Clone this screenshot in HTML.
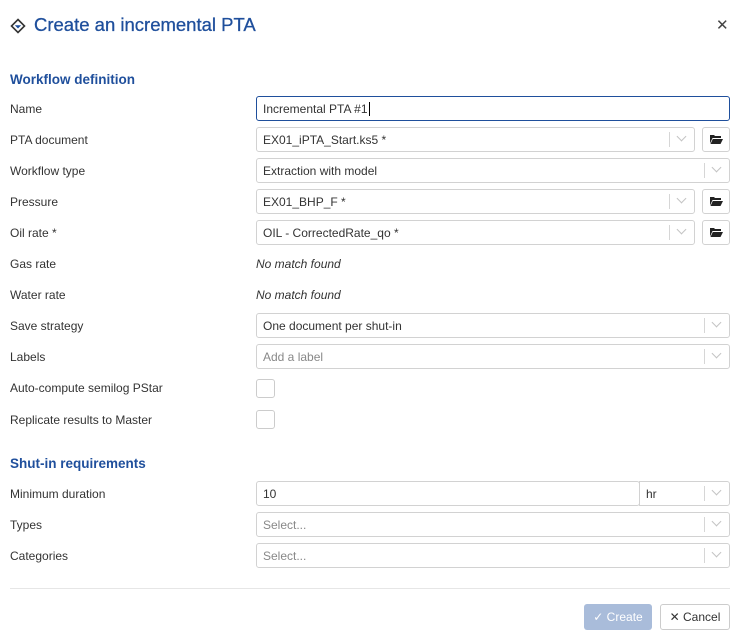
<!DOCTYPE html><html><head><style>
*{box-sizing:border-box;margin:0;padding:0}
body{width:740px;height:643px;background:#fff;font-family:"Liberation Sans",sans-serif;font-size:12px;color:#333;position:relative;overflow:hidden}
.a{position:absolute}
.l{position:absolute;left:10px;line-height:14px}
.h{position:absolute;left:10px;font-size:13.5px;font-weight:bold;color:#1f4f9c}
.b{position:absolute;height:25px;border:1px solid #d2d2d2;border-radius:3px;background:#fff;line-height:25px;padding-left:6px;white-space:nowrap}
.dd{position:absolute;right:0;top:4px;width:25px;height:15px;border-left:1px solid #d6d6d6}
.dd:after{content:"";position:absolute;left:8px;top:1px;width:6px;height:6px;border-right:1px solid #c4c4c4;border-bottom:1px solid #c4c4c4;transform:rotate(45deg)}
.f{position:absolute;width:28px;height:25px;border:1px solid #d2d2d2;border-radius:3px;left:702px}
.f svg{position:absolute;left:7px;top:6px}
.cb{position:absolute;left:256px;width:19px;height:19px;border:1px solid #ccc;border-radius:3px}
.ph{color:#888}
</style></head><body>
<svg class="a" style="left:10px;top:18px" width="16" height="16" viewBox="0 0 16 16"><path d="M8 1.5L14.5 8 8 14.5 1.5 8Z" fill="none" stroke="#333" stroke-width="1.6"/><path d="M4.8 7.2h6.4L8 10.5Z" fill="#1f4f9c"/></svg>
<div class="a" style="left:34px;top:14px;font-size:18.5px;color:#1f4f9c;-webkit-text-stroke:0.3px #1f4f9c">Create an incremental PTA</div>
<div class="a" style="left:716px;top:16px;font-size:15px;color:#444">✕</div>
<div class="h" style="top:72px">Workflow definition</div>
<div class="l" style="top:102px">Name</div>
<div class="b" style="left:256px;top:96px;width:474px;border-color:#1f4f9c">Incremental PTA #1<span style="border-left:1px solid #000;margin-left:1px"></span></div>
<div class="l" style="top:133px">PTA document</div>
<div class="b" style="left:256px;top:127px;width:439px">EX01_iPTA_Start.ks5 *<span class="dd"></span></div>
<div class="f" style="top:127px"><svg width="13" height="11" viewBox="0 0 13 11"><path d="M0 1h4l1 1h6v2H2.5L0 9.5Z M2.8 5H13L10.5 10H0.5Z" fill="#222"/></svg></div>
<div class="l" style="top:164px">Workflow type</div>
<div class="b" style="left:256px;top:158px;width:474px">Extraction with model<span class="dd"></span></div>
<div class="l" style="top:195px">Pressure</div>
<div class="b" style="left:256px;top:189px;width:439px">EX01_BHP_F *<span class="dd"></span></div>
<div class="f" style="top:189px"><svg width="13" height="11" viewBox="0 0 13 11"><path d="M0 1h4l1 1h6v2H2.5L0 9.5Z M2.8 5H13L10.5 10H0.5Z" fill="#222"/></svg></div>
<div class="l" style="top:226px">Oil rate *</div>
<div class="b" style="left:256px;top:220px;width:439px">OIL - CorrectedRate_qo *<span class="dd"></span></div>
<div class="f" style="top:220px"><svg width="13" height="11" viewBox="0 0 13 11"><path d="M0 1h4l1 1h6v2H2.5L0 9.5Z M2.8 5H13L10.5 10H0.5Z" fill="#222"/></svg></div>
<div class="l" style="top:257px">Gas rate</div>
<div class="a" style="left:256px;top:257px;font-style:italic">No match found</div>
<div class="l" style="top:288px">Water rate</div>
<div class="a" style="left:256px;top:288px;font-style:italic">No match found</div>
<div class="l" style="top:319px">Save strategy</div>
<div class="b" style="left:256px;top:313px;width:474px">One document per shut-in<span class="dd"></span></div>
<div class="l" style="top:350px">Labels</div>
<div class="b ph" style="left:256px;top:344px;width:474px">Add a label<span class="dd"></span></div>
<div class="l" style="top:381px">Auto-compute semilog PStar</div>
<div class="cb" style="top:379px"></div>
<div class="l" style="top:413px">Replicate results to Master</div>
<div class="cb" style="top:410px"></div>
<div class="h" style="top:456px">Shut-in requirements</div>
<div class="l" style="top:487px">Minimum duration</div>
<div class="b" style="left:256px;top:481px;width:384px">10</div>
<div class="b" style="left:639px;top:481px;width:91px;border-radius:0 3px 3px 0">hr<span class="dd"></span></div>
<div class="l" style="top:518px">Types</div>
<div class="b ph" style="left:256px;top:512px;width:474px">Select...<span class="dd"></span></div>
<div class="l" style="top:549px">Categories</div>
<div class="b ph" style="left:256px;top:543px;width:474px">Select...<span class="dd"></span></div>
<div class="a" style="left:10px;top:588px;width:720px;height:1px;background:#e6e6e6"></div>
<div class="a" style="left:584px;top:604px;width:68px;height:26px;background:#a9bcda;border-radius:3px;color:#fff;line-height:26px;text-align:center">✓ Create</div>
<div class="a" style="left:660px;top:604px;width:70px;height:26px;border:1px solid #ccc;border-radius:3px;line-height:24px;text-align:center;color:#333">✕ Cancel</div>
</body></html>
